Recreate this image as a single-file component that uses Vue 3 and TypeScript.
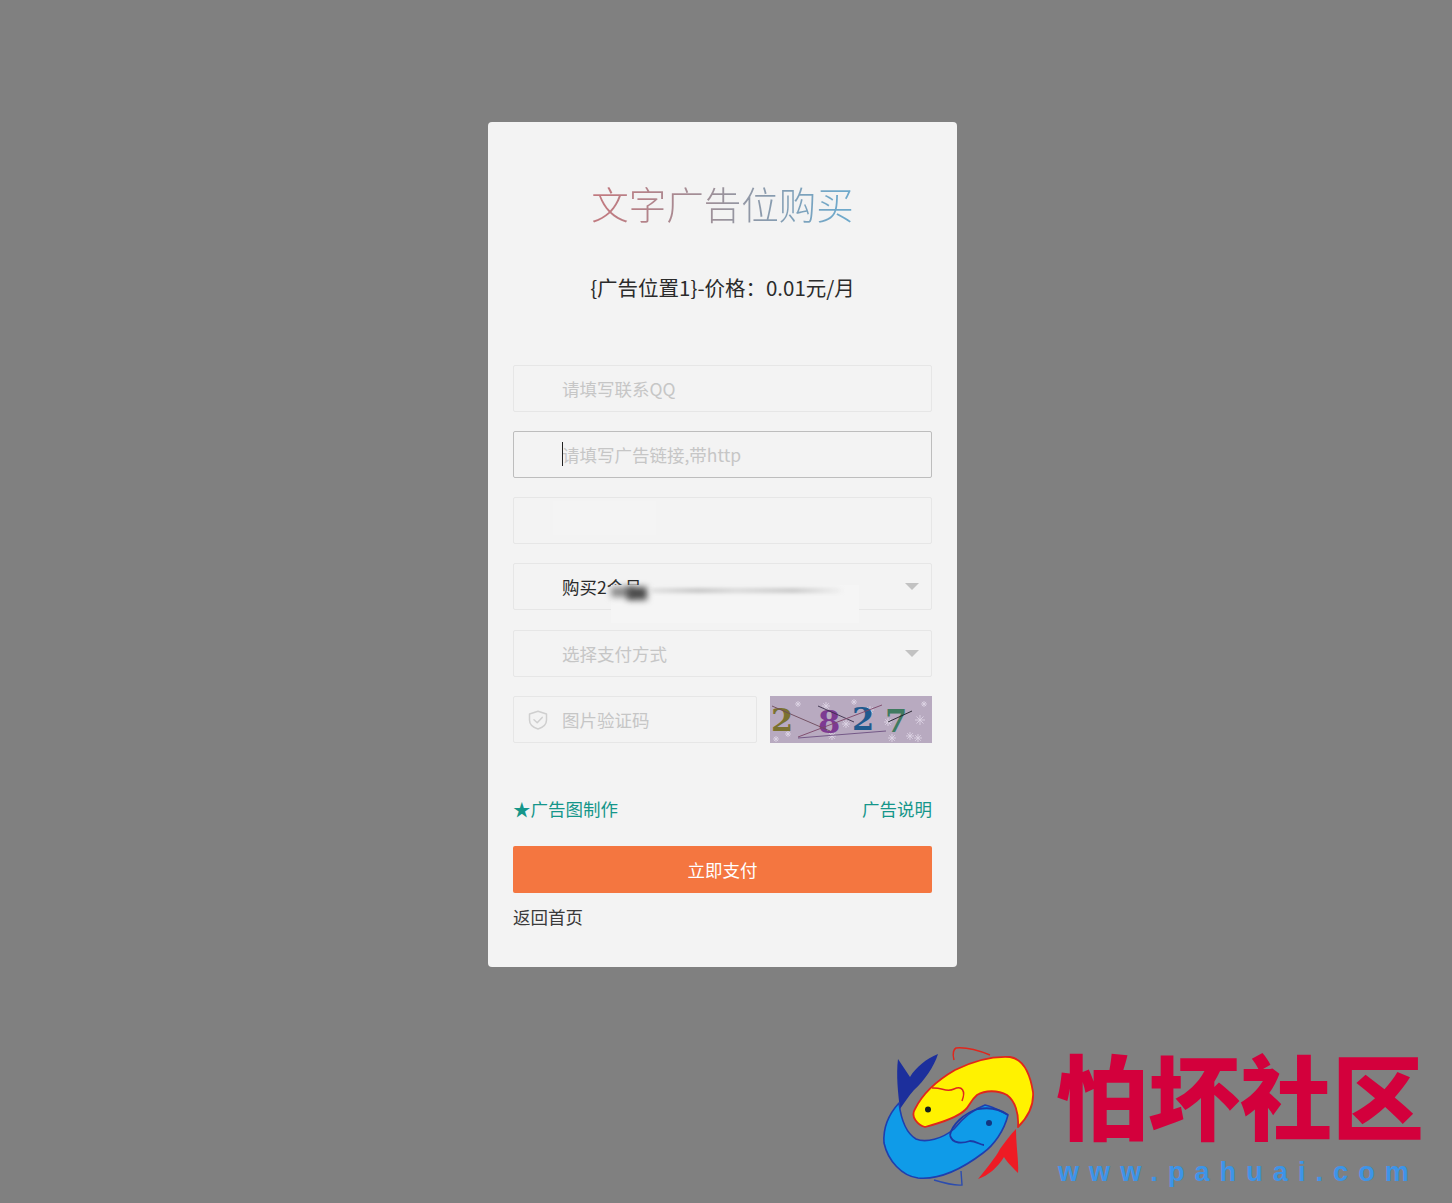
<script setup lang="ts">
interface Field {
  placeholder: string
  focused?: boolean
  patched?: boolean
}
const fields: Field[] = [
  { placeholder: '请填写联系QQ' },
  { placeholder: '请填写广告链接,带http', focused: true },
  { placeholder: '', patched: true },
]
const flakes: [number, number, number][] = [
  [28, 8, 3], [56, 10, 4], [84, 6, 3], [100, 14, 4], [118, 26, 4], [150, 24, 5], [140, 40, 4],
  [18, 38, 3], [62, 40, 4], [122, 42, 4], [154, 8, 3], [76, 28, 4], [6, 43, 3], [148, 42, 4],
]
function flake(f: [number, number, number]): string {
  const [x, y, r] = f
  return `M${x - r} ${y}H${x + r}M${x} ${y - r}V${y + r}M${x - r * 0.7} ${y - r * 0.7}L${x + r * 0.7} ${y + r * 0.7}M${x + r * 0.7} ${y - r * 0.7}L${x - r * 0.7} ${y + r * 0.7}`
}
</script>

<template>
  <div class="page">
    <main class="card">
      <h1 class="title">文字广告位购买</h1>
      <p class="subtitle">{广告位置1}-价格：0.01元/月</p>

      <form class="fields" @submit.prevent>
        <div v-for="(f, i) in fields" :key="i" class="field">
          <input class="control" :class="{ focused: f.focused }" :placeholder="f.placeholder" />
          <i v-if="f.focused" class="caret"></i>
          <i v-if="f.patched" class="patch"></i>
        </div>

        <div class="field">
          <div class="control select chosen">购买2个月</div>
          <i class="arrow"></i>
          <div class="smudge">
            <i class="blob light"></i>
            <i class="blob"></i>
            <i class="streak"></i>
          </div>
        </div>

        <div class="field">
          <div class="control select muted">选择支付方式</div>
          <i class="arrow"></i>
        </div>

        <div class="captcha-row">
          <div class="field grow">
            <svg class="shield" viewBox="0 0 20 20" fill="none" stroke="#cfcfcf" stroke-width="1.5" stroke-linejoin="round" stroke-linecap="round">
              <path d="M10 1.2 L18.5 4 V10 C18.5 14.6 14.6 17.6 10 19 C5.4 17.6 1.5 14.6 1.5 10 V4 Z" />
              <path d="M6 9.8 L9.2 12.8 L14.2 7.4" />
            </svg>
            <input class="control" placeholder="图片验证码" />
          </div>
          <svg class="captcha" viewBox="0 0 162 47" preserveAspectRatio="none">
            <rect width="162" height="47" fill="#b8aac0" />
            <path v-for="(f, i) in flakes" :key="i" :d="flake(f)" stroke="#dcd4e4" stroke-width="0.9" fill="none" />
            <g font-family="'DejaVu Serif', 'Liberation Serif', serif" font-weight="700" font-size="32">
              <text x="1" y="35" fill="#7b7230">2</text>
              <text x="48" y="37" fill="#7d3a92">8</text>
              <text x="82" y="34" fill="#1f5a8e">2</text>
              <text x="115" y="36" fill="#3f7a60">7</text>
            </g>
            <g fill="none" stroke-width="0.9">
              <path d="M2 10 L60 35" stroke="#6d4a5a" />
              <path d="M48 10 L84 26" stroke="#3a2f4a" />
              <path d="M28 41 L112 9" stroke="#7c4668" />
              <path d="M28 42 L116 35" stroke="#6c4f80" />
              <path d="M118 26 L142 15" stroke="#1c1c26" />
            </g>
          </svg>
        </div>

        <div class="links">
          <a class="link">★广告图制作</a>
          <a class="link">广告说明</a>
        </div>

        <button class="pay" type="button">立即支付</button>
        <a class="back">返回首页</a>
      </form>
    </main>

    <div class="watermark">
      <svg class="fish" viewBox="0 0 180 160">
        <path d="M28 24 L40 42 C46 32 56 24 68 19 C64 32 54 46 44 55 C38 62 34 68 30 74 C28 58 26 40 28 24 Z" fill="#1c2f9c" />
        <path d="M29 68 C18 80 13 94 14 108 C18 126 32 141 48 143 C70 145 92 134 113 118 C124 110 134 96 138 80 C130 76 124 72 115 70 C104 74 92 84 84 94 C72 104 56 108 46 104 C36 98 31 84 29 68 Z" fill="#0f9be8" stroke="#1f3fae" stroke-width="1.6" stroke-linejoin="round" />
        <path d="M80 100 C82 90 94 78 108 74 C120 72 130 74 138 80 M80 100 C82 110 94 108 100 106 C106 106 110 110 114 110" fill="none" stroke="#1c3aa6" stroke-width="1.8" />
        <path d="M64 145 C74 148 84 151 92 150 L91 136" fill="none" stroke="#2c4cae" stroke-width="1.4" />
        <path d="M45 74 C52 60 66 46 85 35 C103 26 122 21 140 22 C153 24 160 38 163 57 C164 70 158 82 148 92 C149 78 145 66 137 60 C128 55 115 55 107 60 C100 66 99 72 95 75 C88 82 70 88 55 92 C48 90 40 82 45 74 Z" fill="#fff200" stroke="#e0261c" stroke-width="1.8" stroke-linejoin="round" />
        <path d="M62 53 C72 52 76 58 84 54 C92 50 96 56 92 66 M84 25 C82 18 84 14 86 13 C96 12 110 16 120 20" fill="none" stroke="#e0261c" stroke-width="1.5" />
        <path d="M146 94 C146 112 149 126 148 138 C142 132 136 126 134 122 C128 132 118 141 108 144 C116 134 126 122 130 114 C136 106 140 100 146 94 Z" fill="#ee1b24" />
        <circle cx="58" cy="74.5" r="3" fill="#15201c" />
        <circle cx="119" cy="88" r="3" fill="#123680" />
      </svg>
      <div class="brand">
        <div class="brand-name">怕坏社区</div>
        <div class="brand-url">www.pahuai.com</div>
      </div>
    </div>
  </div>
</template>

<style>
html, body { margin: 0; background: #808080; }
</style>

<style scoped>
.page {
  position: relative;
  box-sizing: border-box;
  height: 1203px;
  padding: 122px 0 0 488px;
  background: #808080;
  overflow: hidden;
  font-family: "Noto Sans CJK SC", "Noto Sans", sans-serif;
}
.card {
  box-sizing: border-box;
  width: 469px;
  height: 845px;
  padding: 51px 25px 0;
  background: #f3f3f3;
  border-radius: 4px;
  text-align: center;
}
.title {
  margin: 0;
  font-size: 37.5px;
  line-height: 60px;
  font-weight: 300;
  background: linear-gradient(90deg, #c07a80 22%, #9a939c 50%, #6fa9cb 78%);
  -webkit-background-clip: text;
  background-clip: text;
  color: transparent;
}
.subtitle {
  margin: 39px 0 0;
  font-size: 20.5px;
  line-height: 30px;
  color: #2b2b2b;
}
.fields {
  display: flex;
  flex-direction: column;
  gap: 19.2px;
  margin-top: 62.8px;
  text-align: left;
}
.field { position: relative; }
.grow { flex: 1; }
.control {
  display: block;
  box-sizing: border-box;
  width: 100%;
  height: 47px;
  padding: 0 0 0 48px;
  border: 1px solid #e6e6e6;
  border-radius: 2px;
  background: #f3f3f3;
  font-family: inherit;
  font-size: 17.5px;
  line-height: 45px;
  color: #333;
  outline: none;
}
.control::placeholder { color: #c6c6c6; opacity: 1; }
.focused { border-color: #bdbdbd; }
.select.muted { color: #c6c6c6; }
.select.chosen { color: #2b2b2b; }
.caret {
  position: absolute;
  left: 49px;
  top: 11px;
  width: 1px;
  height: 24px;
  background: #222;
}
.patch {
  position: absolute;
  left: 40px;
  top: 4px;
  width: 103px;
  height: 34px;
  background: #f4f4f4;
}
.arrow {
  position: absolute;
  right: 13px;
  top: 20px;
  width: 0;
  height: 0;
  border-style: solid;
  border-width: 7px 7px 0;
  border-color: #c2c2c2 transparent transparent;
}
.smudge {
  position: absolute;
  left: 98px;
  top: 22px;
  width: 248px;
  height: 38px;
  background: #f5f5f5;
}
.blob {
  position: absolute;
  left: 16px;
  top: 2px;
  width: 20px;
  height: 13px;
  background: #4a4a4a;
  filter: blur(3px);
}
.blob.light {
  left: 0;
  width: 22px;
  height: 10px;
  background: #8a8a8a;
}
.streak {
  position: absolute;
  left: 40px;
  top: 4px;
  width: 190px;
  height: 3px;
  background: linear-gradient(90deg, #d4d4d4, #a8a8a8 25%, #c8c8c8 45%, #adadad 75%, #ececec);
  filter: blur(2px);
}
.captcha-row {
  display: flex;
  align-items: flex-start;
  gap: 13px;
}
.shield {
  position: absolute;
  left: 15px;
  top: 14px;
  width: 20px;
  height: 20px;
}
.captcha {
  display: block;
  flex: none;
  width: 162px;
  height: 47px;
}
.links {
  display: flex;
  justify-content: space-between;
  margin-top: 32px;
  line-height: 30px;
}
.link {
  font-size: 17.5px;
  color: #15968a;
}
.pay {
  display: block;
  width: 100%;
  height: 47px;
  margin-top: 2.8px;
  border: 0;
  border-radius: 2px;
  background: #f47640;
  color: #fff;
  font-family: inherit;
  font-size: 17.5px;
}
.back {
  margin-top: -10.2px;
  font-size: 17.5px;
  line-height: 30px;
  color: #3a3a3a;
}
.watermark {
  position: absolute;
  left: 870px;
  top: 1035px;
  display: flex;
}
.fish {
  display: block;
  flex: none;
  width: 180px;
  height: 160px;
}
.brand {
  margin-left: 6px;
  width: 380px;
}
.brand-name {
  font-size: 92px;
  line-height: 116px;
  font-weight: 900;
  white-space: nowrap;
  color: #d3003c;
}
.brand-url {
  margin-top: 6px;
  margin-left: 2px;
  font-family: "Liberation Sans", sans-serif;
  font-size: 27px;
  line-height: 30px;
  font-weight: 700;
  letter-spacing: 10.1px;
  white-space: nowrap;
  color: #3d94e8;
}
</style>
